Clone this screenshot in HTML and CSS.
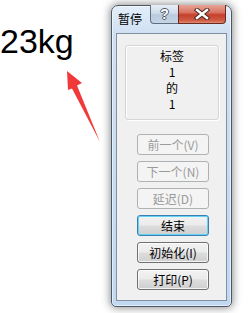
FILE: index.html
```html
<!DOCTYPE html>
<html>
<head>
<meta charset="utf-8">
<link rel="stylesheet" href="styles.css">
</head>
<body>
<div class="page">
  <div class="left">
    <div class="weight">23kg</div>
    <svg class="arrow" width="111" height="90" viewBox="0 58 111 90">
      <polygon points="67,71 82,83 77,85.5 100,142 72,88.5 68,90" fill="#f03a3a"/>
    </svg>
  </div>
  <div class="window">
    <div class="titlebar">
      <span class="title">暂停</span>
      <div class="caption-btns">
        <span class="cap help">?</span>
        <span class="cap close">
          <svg width="16" height="12" viewBox="0 0 16 12">
            <path d="M3 2 L13 10 M13 2 L3 10" stroke="#4a2a24" stroke-width="4.4" stroke-linecap="square"/>
            <path d="M3 2 L13 10 M13 2 L3 10" stroke="#ffffff" stroke-width="2.4" stroke-linecap="square"/>
          </svg>
        </span>
      </div>
    </div>
    <div class="client">
      <div class="group">
        <div>标签</div>
        <div>1</div>
        <div>的</div>
        <div>1</div>
      </div>
      <div class="buttons">
        <div class="btn disabled">前一个(V)</div>
        <div class="btn disabled">下一个(N)</div>
        <div class="btn disabled">延迟(D)</div>
        <div class="btn default">结束</div>
        <div class="btn">初始化(I)</div>
        <div class="btn">打印(P)</div>
      </div>
    </div>
  </div>
</div>
</body>
</html>
```
FILE: styles.css
```css
html, body {
  margin: 0;
  padding: 0;
  background: #ffffff;
}
body {
  width: 250px;
  height: 313px;
  overflow: hidden;
  font-family: "Noto Sans CJK SC", "Liberation Sans", sans-serif;
}
.page {
  display: flex;
  align-items: flex-start;
}
.left {
  width: 111px;
  flex: none;
}
.weight {
  margin-top: 24px;
  height: 34px;
  line-height: 34px;
  font-family: "Liberation Sans", Arial, sans-serif;
  font-size: 34px;
  color: #000;
  white-space: nowrap;
}
.arrow {
  display: block;
}
.window {
  flex: none;
  box-sizing: border-box;
  width: 121px;
  height: 302px;
  margin-top: 5px;
  border: 1px solid #4b5866;
  border-radius: 7px 7px 5px 5px;
  background: linear-gradient(to bottom, #e3eef9 0px, #cfe0f3 28px, #c0d8f2 100%);
  box-shadow: 0 0 9px 1px rgba(0,0,0,0.45), inset 0 0 0 1px rgba(255,255,255,0.55);
  padding: 0 4px 5px 4px;
  display: flex;
  flex-direction: column;
}
.titlebar {
  height: 27px;
  flex: none;
  display: flex;
  align-items: flex-start;
}
.title {
  font-size: 12px;
  line-height: 14px;
  padding: 6px 0 0 2px;
  color: #000;
}
.caption-btns {
  margin-left: auto;
  margin-right: 1px;
  margin-top: -1px;
  display: flex;
}
.cap {
  box-sizing: border-box;
  height: 19px;
  display: flex;
  align-items: center;
  justify-content: center;
  border: 1px solid #5f6f82;
  border-top: none;
}
.help {
  width: 28px;
  border-right: none;
  border-radius: 0 0 0 4px;
  background: linear-gradient(to bottom, #e6eef6 0%, #cfdcea 45%, #b9cadc 55%, #c5d5e6 100%);
  color: #fff;
  font-family: "Liberation Sans", sans-serif;
  font-weight: bold;
  font-size: 14px;
  text-shadow: 1px 0 #4d5866, -1px 0 #4d5866, 0 1px #4d5866, 0 -1px #4d5866;
}
.close {
  width: 48px;
  border-radius: 0 0 4px 0;
  border-color: #6b2b22;
  background: linear-gradient(to bottom, #e8a496 0%, #d97766 40%, #c6402d 55%, #cf5a44 85%, #e08a6e 100%);
}
.client {
  flex: 1;
  border: 1px solid #82909f;
  background: #f0f0f0;
  display: flex;
  flex-direction: column;
}
.group {
  box-sizing: border-box;
  width: 94px;
  height: 75px;
  margin: 11px 0 0 8px;
  border: 1px solid #d6d6d6;
  border-radius: 3px;
  box-shadow: inset 1px 1px 0 #ffffff, 1px 1px 0 #ffffff;
  padding-top: 2px;
  text-align: center;
  font-size: 12px;
  line-height: 16px;
  color: #000;
}
.buttons {
  margin: 14px 0 0 20px;
  display: flex;
  flex-direction: column;
  gap: 6px;
}
.btn {
  box-sizing: border-box;
  width: 72px;
  height: 21px;
  border: 1px solid #707070;
  border-radius: 3px;
  background: linear-gradient(to bottom, #f2f2f2 0%, #ebebeb 48%, #dddddd 52%, #cfcfcf 100%);
  box-shadow: inset 0 0 0 1px rgba(255,255,255,0.75);
  font-size: 12px;
  line-height: 19px;
  text-align: center;
  color: #000;
}
.btn.disabled {
  border-color: #adb2b5;
  background: #f4f4f4;
  box-shadow: none;
  color: #9a9a9a;
}
.btn.default {
  border-color: #3c7fb1;
  box-shadow: inset 0 0 0 1px #5fd4f7;
}
```
